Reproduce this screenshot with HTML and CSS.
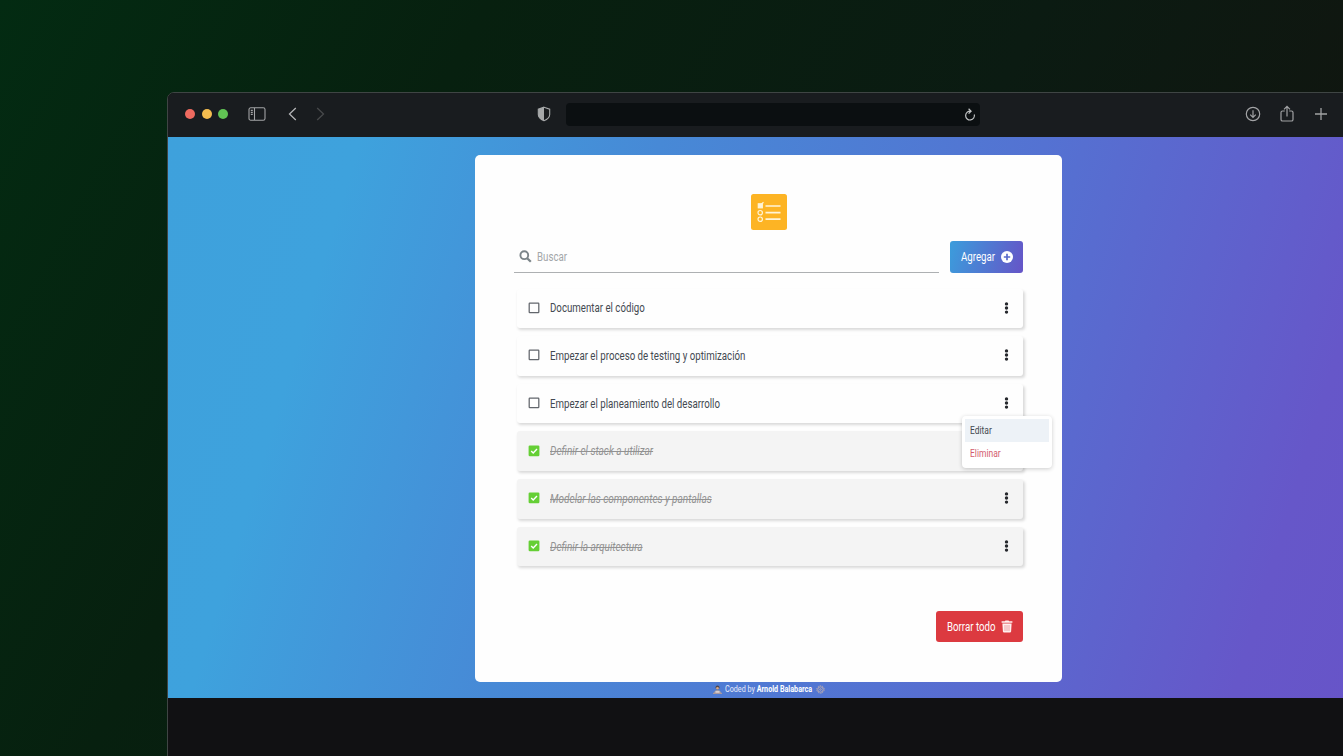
FILE: index.html
```html
<!DOCTYPE html>
<html lang="es">
<head>
<meta charset="utf-8">
<title>Lista de tareas</title>
<link rel="stylesheet" href="styles.css">
</head>
<body>
<svg class="defs" width="0" height="0">
  <symbol id="dots" viewBox="0 0 5 12"><g fill="#25272c"><circle cx="2.5" cy="1.9" r="1.7"/><circle cx="2.5" cy="6" r="1.7"/><circle cx="2.5" cy="10.1" r="1.7"/></g></symbol>
  <symbol id="empty" viewBox="0 0 12 12"><rect x="1.2" y="1.2" width="9.6" height="9.4" rx=".6" fill="none" stroke="#62666c" stroke-width="1.25"/></symbol>
  <symbol id="checked" viewBox="0 0 12 12"><rect x=".6" y=".6" width="10.8" height="10.6" rx="1.2" fill="#65cf35"/><path d="M3.2 6l2 2 3.8-3.9" fill="none" stroke="#fff" stroke-width="1.4"/></symbol>
</svg>
<div class="window">
  <header class="bar">
    <div class="lights"><i class="red"></i><i class="yellow"></i><i class="green"></i></div>
    <svg class="side" width="18" height="14" viewBox="0 0 18 14" fill="none" stroke="#a3a4a6" stroke-width="1.1"><rect x="1" y=".8" width="16" height="12.4" rx="1.8"/><path d="M6.5 1v12M2.8 3.4h2M2.8 5.4h2M2.8 7.4h2"/></svg>
    <svg class="back" width="9" height="14" viewBox="0 0 9 14" fill="none" stroke="#b4b5b7" stroke-width="1.3"><path d="M7.8 1L1.5 7l6.3 6"/></svg>
    <svg class="forward" width="9" height="14" viewBox="0 0 9 14" fill="none" stroke="#47494b" stroke-width="1.3"><path d="M1.2 1l6.3 6-6.3 6"/></svg>
    <svg class="shield" width="14" height="16" viewBox="0 0 14 16"><path d="M7 1.2l5.700 2v5.200c0 3-2.700 5-5.700 6.300-3-1.300-5.700-3.300-5.700-6.300V3.200z" fill="none" stroke="#a6a8a9" stroke-width="1.1"/><path d="M7 1.200v13.500C4 13.400 1.300 11.400 1.300 8.400V3.200z" fill="#a6a8a9"/></svg>
    <div class="address"><svg width="12" height="13" viewBox="0 0 12 13" fill="none" stroke="#c3c5c6" stroke-width="1.2"><path d="M10.300 6.500A4.400 4.400 0 1 1 6.400 3.200M4.600.8l2.500 2.400-2.500 2.400"/></svg></div>
    <div class="tools">
      <svg width="16" height="16" viewBox="0 0 16 16" fill="none" stroke="#a1a2a4" stroke-width="1.200"><circle cx="8" cy="8" r="6.700"/><path d="M8 4.300v7M5.200 8.600L8 11.400l2.800-2.800"/></svg>
      <svg width="14" height="18" viewBox="0 0 14 18" fill="none" stroke="#a1a2a4" stroke-width="1.200"><path d="M4.800 6H2.600Q1 6 1 7.600v6.800Q1 16 2.600 16h8.800q1.600 0 1.600-1.600V7.600Q13 6 11.400 6H9.200M7 11.500V1.500M4 4.400l3-3 3 3"/></svg>
      <svg width="14" height="14" viewBox="0 0 14 14" stroke="#a1a2a4" stroke-width="1.300"><path d="M7 1v12M1 7h12"/></svg>
    </div>
  </header>
  <main class="page">
    <section class="card">
      <svg class="logo" width="36" height="36" viewBox="0 0 36 36"><rect width="36" height="36" rx="2.500" fill="#fdb424"/><g fill="none" stroke="#fff4d6" stroke-width="1.200"><rect x="7.300" y="9.800" width="4" height="4" fill="#fff4d6"/><path d="M9 11.500l3.500-3.300"/><circle cx="9.200" cy="18.700" r="2.200"/><circle cx="9.200" cy="25.200" r="2.200"/></g><path d="M14.500 12h15M14.500 18.600h15M14.500 25.200h15" stroke="#fff4d6" stroke-width="1.700"/></svg>
      <div class="actions">
        <div class="search">
          <svg width="13" height="13" viewBox="0 0 13 13" fill="none" stroke="#7b8489" stroke-width="1.900"><circle cx="5.300" cy="5.200" r="3.900"/><path d="M8.200 8.200l3.600 3.500" stroke-width="2.300"/></svg>
          <span class="txt">Buscar</span>
        </div>
        <div class="btn add"><span class="txt">Agregar</span><svg width="12" height="12" viewBox="0 0 12 12"><circle cx="6" cy="6" r="6" fill="#fff"/><path d="M6 2.800v6.400M2.800 6h6.400" stroke="#5a6ccc" stroke-width="1.700"/></svg></div>
      </div>
      <ul class="list">
        <li><svg class="check"><use href="#empty"/></svg><span class="txt">Documentar el código</span><svg class="more"><use href="#dots"/></svg></li>
        <li><svg class="check"><use href="#empty"/></svg><span class="txt">Empezar el proceso de testing y optimización</span><svg class="more"><use href="#dots"/></svg></li>
        <li><svg class="check"><use href="#empty"/></svg><span class="txt">Empezar el planeamiento del desarrollo</span><svg class="more"><use href="#dots"/></svg>
          <div class="menu"><div class="item active"><span class="txt">Editar</span></div><div class="item danger"><span class="txt">Eliminar</span></div></div>
        </li>
        <li class="done"><svg class="check"><use href="#checked"/></svg><span class="txt">Definir el stack a utilizar</span><svg class="more"><use href="#dots"/></svg></li>
        <li class="done"><svg class="check"><use href="#checked"/></svg><span class="txt">Modelar las componentes y pantallas</span><svg class="more"><use href="#dots"/></svg></li>
        <li class="done"><svg class="check"><use href="#checked"/></svg><span class="txt">Definir la arquitectura</span><svg class="more"><use href="#dots"/></svg></li>
      </ul>
      <div class="btn clear"><span class="txt">Borrar todo</span><svg width="12" height="13" viewBox="0 0 12 13"><path d="M.6 1.200h3.200L4.500.4h3l.7.8h3.200v1.500H.6zM1.400 3.400h9.200l-.5 8.100q-.1 1.100-1.200 1.100H3.100q-1.100 0-1.200-1.100z" fill="#fff0ee"/><path d="M4 5v6M6 5v6M8 5v6" stroke="#e5848a" stroke-width=".7"/></svg></div>
    </section>
    <footer class="credit">
      <svg width="9" height="9" viewBox="0 0 9 9"><circle cx="4.500" cy="2.500" r="2" fill="#51464c"/><circle cx="4.500" cy="3.200" r="1.300" fill="#d7a98a"/><path d="M1 8Q1.500 5 4.500 5T8 8z" fill="#a29c9f"/><path d="M2.500 6h4v2h-4z" fill="#d6ced0"/><path d="M0 7.800h9v1H0z" fill="#bfa095"/></svg>
      <span class="txt">Coded by <b>Arnold Balabarca</b></span>
      <svg width="9" height="9" viewBox="0 0 9 9" fill="none" stroke="#b5a9b3"><circle cx="4.500" cy="4.500" r="3.700" stroke-width="1" stroke-dasharray="1.400 .9"/><circle cx="4.500" cy="4.500" r="2.700" stroke-width="1"/><circle cx="4.500" cy="4.500" r=".8"/></svg>
    </footer>
  </main>
</div>
</body>
</html>
```
FILE: styles.css
```css
* { box-sizing: border-box; }
body {
  margin: 0;
  height: 756px;
  overflow: hidden;
  padding: 92px 0 0 167px;
  background: linear-gradient(118deg, #032b12 0%, #07200f 28%, #0b1b12 60%, #12140f 90%);
  font: 12px/16px Roboto, sans-serif;
  color: #434951;
}
svg { display: block; flex: none; }
.defs { position: absolute; }
.window {
  width: 1203px;
  height: 680px;
  border: 1px solid #3f4544;
  border-radius: 7px 0 0 0;
  background: #111113;
  overflow: hidden;
}
.bar { height: 44px; padding-bottom: 2px; display: flex; align-items: center; background: #191c1f; }
.lights { display: flex; gap: 6.500px; margin-left: 17px; }
.lights i { width: 10px; height: 10px; border-radius: 50%; }
.red { background: #ee6a5f; }
.yellow { background: #f5bd4f; }
.green { background: #61c454; }
.side { margin-left: 20px; }
.back { margin-left: 22px; }
.forward { margin-left: 19px; }
.shield { margin-left: 212px; }
.address {
  width: 414px;
  height: 23px;
  margin-left: 15px;
  padding-right: 4px;
  display: flex;
  align-items: center;
  justify-content: flex-end;
  border-radius: 4px;
  background: #0b0f11;
}
.tools { display: flex; align-items: center; gap: 19.500px; margin-left: 264.500px; }
.page {
  height: 561px;
  display: flex;
  flex-direction: column;
  align-items: center;
  padding-top: 18px;
  background: linear-gradient(107deg, #3ea1dc 0%, #3ea2dd 14%, #4789d6 36%, #5472d2 64%, #6657c9 90%, #6754c8 100%);
}
.card {
  width: 587px;
  height: 527px;
  flex: none;
  display: flex;
  flex-direction: column;
  padding: 39px 39px 0;
  border-radius: 5px;
  background: #fefefe;
}
.logo { align-self: center; }
.txt {
  display: inline-block;
  white-space: nowrap;
  transform: scaleX(.808);
  transform-origin: 0 50%;
}
.actions { display: flex; justify-content: space-between; margin-top: 11px; height: 32px; }
.search {
  width: 425px;
  display: flex;
  align-items: center;
  gap: 5px;
  padding-left: 5px;
  border-bottom: 1px solid #adb0b2;
  color: #a3a6a9;
}
.btn {
  display: flex;
  align-items: center;
  justify-content: space-between;
  border-radius: 3px;
  color: #fff;
}
.btn .txt { width: 0; }
.add { width: 73px; padding: 0 10px 0 11px; background: linear-gradient(105deg, #3b9ddc, #6654c7); }
.list { list-style: none; margin: 15.500px 0 0 3px; padding: 0; display: grid; gap: 8px; }
.list li {
  position: relative;
  width: 506px;
  height: 39.650px;
  display: flex;
  align-items: center;
  padding: 0 14px 0 11px;
  border-radius: 3px;
  background: #fefefe;
  box-shadow: 1.500px 2px 3px rgba(0, 0, 0, .15);
}
.list .done { background: #f4f4f4; color: #929292; }
.done > .txt { font-style: italic; text-decoration: line-through; transform: scaleX(.835); }
.check { width: 12px; height: 12px; margin: 0 10px 1px 0; }
.more { width: 5px; height: 12px; margin: 0 0 1px auto; }
.menu {
  position: absolute;
  z-index: 2;
  top: 32px;
  left: 445px;
  width: 90px;
  height: 52px;
  padding: 3px;
  border-radius: 4px;
  background: #fff;
  box-shadow: 0 1px 4px rgba(0, 0, 0, .2);
  font-size: 10.500px;
}
.item { height: 23px; padding: 4px 5px 3px; }
.active { background: #edf2f7; }
.danger { color: #d35c6d; }
.clear {
  align-self: flex-end;
  width: 87px;
  height: 31px;
  margin-top: 45px;
  padding: 0 10px 0 11px;
  background: #dc3a40;
}
.credit {
  display: flex;
  align-items: center;
  gap: 3px;
  height: 14px;
  font-size: 8.500px;
  line-height: 14px;
  color: #e9edfa;
}
.credit .txt { width: 88px; transform: scaleX(.845); }
.credit b { color: #fff; }
```
